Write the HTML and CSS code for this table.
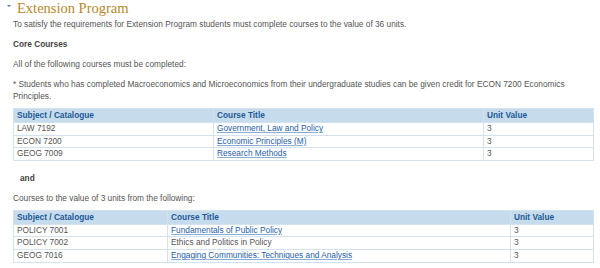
FILE: index.html
```html
<!DOCTYPE html>
<html>
<head>
<meta charset="utf-8">
<link rel="stylesheet" href="styles.css">
</head>
<body>
<div class="page">
  <h2 class="title"><span class="caret"></span>Extension Program</h2>
  <p>To satisfy the requirements for Extension Program students must complete courses to the value of 36 units.</p>
  <p class="strong">Core Courses</p>
  <p>All of the following courses must be completed:</p>
  <p class="before-table">* Students who has completed Macroeconomics and Microeconomics from their undergraduate studies can be given credit for ECON 7200 Economics Principles.</p>
  <table class="courses t1">
    <colgroup><col class="c1"><col class="c2"><col class="c3"></colgroup>
    <thead>
      <tr><th>Subject / Catalogue</th><th>Course Title</th><th>Unit Value</th></tr>
    </thead>
    <tbody>
      <tr><td>LAW 7192</td><td><a href="#">Government, Law and Policy</a></td><td>3</td></tr>
      <tr><td>ECON 7200</td><td><a href="#">Economic Principles (M)</a></td><td>3</td></tr>
      <tr><td>GEOG 7009</td><td><a href="#">Research Methods</a></td><td>3</td></tr>
    </tbody>
  </table>
  <p class="strong and">and</p>
  <p class="before-table">Courses to the value of 3 units from the following:</p>
  <table class="courses t2">
    <colgroup><col class="c1"><col class="c2"><col class="c3"></colgroup>
    <thead>
      <tr><th>Subject / Catalogue</th><th>Course Title</th><th>Unit Value</th></tr>
    </thead>
    <tbody>
      <tr><td>POLICY 7001</td><td><a href="#">Fundamentals of Public Policy</a></td><td>3</td></tr>
      <tr><td>POLICY 7002</td><td>Ethics and Politics in Policy</td><td>3</td></tr>
      <tr><td>GEOG 7016</td><td><a href="#">Engaging Communities: Techniques and Analysis</a></td><td>3</td></tr>
    </tbody>
  </table>
</div>
</body>
</html>
```

FILE: styles.css
```css
html, body {
  margin: 0;
  padding: 0;
  background: #fff;
}
.page {
  padding: 0 7px 0 13px;
  font-family: "Liberation Sans", Arial, sans-serif;
  font-size: 8.3px;
  line-height: 12px;
  color: #555;
}
.title {
  position: relative;
  margin: 0 0 2px 4px;
  font-family: "Liberation Serif", "Times New Roman", serif;
  font-weight: normal;
  font-size: 14.5px;
  line-height: 16px;
  color: #b5892c;
}
.caret {
  position: absolute;
  left: -10px;
  top: 5px;
  width: 0;
  height: 0;
  border-left: 2px solid transparent;
  border-right: 2px solid transparent;
  border-top: 2.5px solid #4a79b0;
}
p {
  margin: 0 0 8px;
}
.strong {
  font-weight: bold;
  color: #444;
}
.and {
  padding-left: 7px;
}
.before-table {
  margin-bottom: 6px;
}
.courses {
  width: 580px;
  border-collapse: collapse;
  table-layout: fixed;
  margin-bottom: 11px;
  border: 1px solid #d3e2ef;
}
.courses th,
.courses td {
  border: 1px solid #d3e2ef;
  padding: 1px 3px;
  text-align: left;
  vertical-align: middle;
  white-space: nowrap;
}
.courses th {
  background: #c6dbeb;
  color: #1d5a98;
  font-weight: bold;
  line-height: 11px;
  height: 13px;
  box-sizing: border-box;
}
.courses td {
  color: #555;
  line-height: 9.6px;
  height: 12.4px;
  box-sizing: border-box;
}
.courses a {
  color: #1f5ea6;
  text-decoration: underline;
  text-decoration-color: #8aabd2;
}
.t1 .c1 { width: 200px; }
.t1 .c2 { width: 270px; }
.t1 .c3 { width: 110px; }
.t2 .c1 { width: 154px; }
.t2 .c2 { width: 343px; }
.t2 .c3 { width: 83px; }
```
